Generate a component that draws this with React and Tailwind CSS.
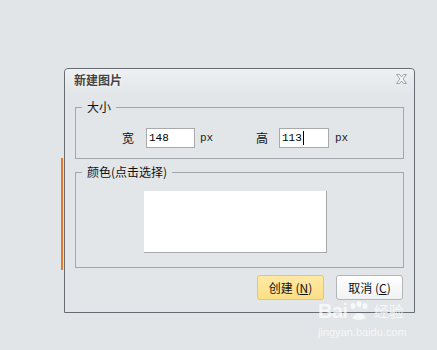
import React from "react";

const cjk = { fontFamily: '"Noto Sans CJK SC", "Noto Sans", sans-serif' };
const mono = { fontFamily: '"Liberation Mono", "Courier New", monospace' };

function CloseIcon() {
  return (
    <svg width="11" height="10" viewBox="0 0 11 10">
      <polygon
        points="0.5,0.5 3.5,0.5 5.5,3 7.5,0.5 10.5,0.5 7,5 10.5,9.5 7.5,9.5 5.5,7 3.5,9.5 0.5,9.5 4,5"
        fill="#f6f7f8"
        stroke="#9ea2a6"
        strokeWidth="1"
        strokeLinejoin="round"
      />
    </svg>
  );
}

function Legend({ children }) {
  return (
    <span
      className="absolute left-[6px] top-[-9px] bg-[#e2e6e9] px-[5px] text-[12px] leading-[16px] text-[#111]"
      style={cjk}
    >
      {children}
    </span>
  );
}

export default function App() {
  return (
    <div className="relative flex h-[350px] w-[437px] bg-[#e1e5e8] pl-[61px] pt-[68px]" style={cjk}>
      <div className="mt-[90px] h-[112px] w-[2px] bg-[#e07a2f]" />
      <div className="ml-[1px] flex h-[245px] w-[351px] flex-col rounded-t-[4px] border border-[#676c72] bg-[#e2e6e9]">
        {/* title bar */}
        <div className="flex h-[27px] items-start justify-between rounded-t-[4px] bg-gradient-to-b from-[#eef0f2] to-[#e2e6e9] pl-[9px] pr-[7px]">
          <span
            className="mt-[3px] text-[12px] font-bold leading-[16px] text-[#444] [text-shadow:0_0_3px_#ffffff]"
            style={cjk}
          >
            新建图片
          </span>
          <span className="mt-[5px]">
            <CloseIcon />
          </span>
        </div>

        <div className="flex flex-col px-[10px]">
          {/* 大小 */}
          <div className="relative mt-[11px] h-[52px] border border-[#a3a7ab]">
            <Legend>大小</Legend>
            <div className="mt-[20px] flex h-[20px] items-center text-[12px] text-[#111]">
              <span className="ml-[46px] w-[12px] leading-[14px]" style={cjk}>宽</span>
              <div
                className="ml-[12px] flex h-[20px] w-[49px] items-center border border-[#a7a9ab] bg-white pl-[2px] text-[11px] text-black"
                style={mono}
              >
                148
              </div>
              <span className="ml-[5px] w-[14px] text-[11px] text-[#222]" style={mono}>px</span>
              <span className="ml-[42px] w-[12px] leading-[14px]" style={cjk}>高</span>
              <div
                className="ml-[11px] flex h-[20px] w-[50px] items-center border border-[#a7a9ab] bg-white pl-[2px] text-[11px] text-black"
                style={mono}
              >
                113
                <span className="ml-[1px] h-[14px] w-[1px] bg-black" />
              </div>
              <span className="ml-[6px] w-[14px] text-[11px] text-[#222]" style={mono}>px</span>
            </div>
          </div>

          {/* 颜色 */}
          <div className="relative mt-[13px] h-[96px] border border-[#a3a7ab]">
            <Legend>颜色(点击选择)</Legend>
            <div className="ml-[68px] mt-[18px] h-[62px] w-[183px] border-b border-r border-[#a6a8aa] bg-white" />
          </div>

          {/* buttons */}
          <div className="mt-[7px] flex justify-end gap-[12px] pr-[1px]">
            <button
              className="flex h-[25px] w-[67px] items-center justify-center rounded-[3px] border border-[#e6c56d] bg-gradient-to-b from-[#fee9a4] to-[#fcdf86] text-[12px] text-[#111]"
              style={cjk}
            >
              创建 (<span className="underline">N</span>)
            </button>
            <button
              className="flex h-[25px] w-[67px] items-center justify-center rounded-[3px] border border-[#b3b6b9] bg-gradient-to-b from-[#ffffff] to-[#f1f2f3] text-[12px] text-[#111]"
              style={cjk}
            >
              取消 (<span className="underline">C</span>)
            </button>
          </div>
        </div>
      </div>

      {/* watermark */}
      <div className="pointer-events-none absolute left-[318px] top-[301px] flex flex-col items-start text-white opacity-70">
        <div className="flex items-end">
          <span className="text-[20px] font-bold leading-[20px] tracking-tight" style={{ fontFamily: '"Liberation Sans", Arial, sans-serif' }}>
            Bai
          </span>
          <svg width="22" height="20" viewBox="0 0 22 20">
            <ellipse cx="5" cy="5" rx="2.5" ry="3" fill="white" />
            <ellipse cx="11" cy="3" rx="2.5" ry="3" fill="white" />
            <ellipse cx="17" cy="5" rx="2.5" ry="3" fill="white" />
            <path d="M4 17 Q11 7 18 17 Q11 21 4 17 Z" fill="white" />
          </svg>
          <span className="ml-[4px] text-[15px] leading-[20px]" style={cjk}>经验</span>
        </div>
        <span className="mt-[5px] text-[11px] leading-[13px]" style={{ fontFamily: '"Liberation Sans", Arial, sans-serif' }}>
          jingyan.baidu.com
        </span>
      </div>
    </div>
  );
}
